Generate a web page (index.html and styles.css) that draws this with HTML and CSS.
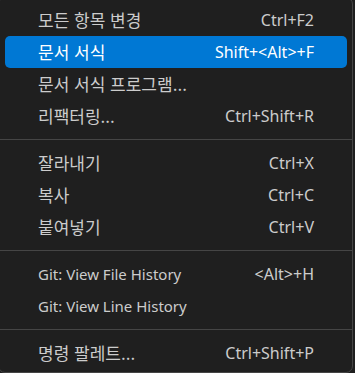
FILE: index.html
```html
<!DOCTYPE html>
<html lang="ko">
<head>
<meta charset="utf-8">
<link rel="stylesheet" href="styles.css">
</head>
<body>
<div class="menu">
  <div class="item"><span class="label ko">모든 항목 변경</span><span class="key">Ctrl+F2</span></div>
  <div class="item active"><span class="label ko">문서 서식</span><span class="key">Shift+&lt;Alt&gt;+F</span></div>
  <div class="item"><span class="label ko">문서 서식 프로그램...</span><span class="key"></span></div>
  <div class="item"><span class="label ko">리팩터링...</span><span class="key">Ctrl+Shift+R</span></div>
  <div class="sep"></div>
  <div class="item"><span class="label ko">잘라내기</span><span class="key">Ctrl+X</span></div>
  <div class="item"><span class="label ko">복사</span><span class="key">Ctrl+C</span></div>
  <div class="item"><span class="label ko">붙여넣기</span><span class="key">Ctrl+V</span></div>
  <div class="sep"></div>
  <div class="item"><span class="label">Git: View File History</span><span class="key">&lt;Alt&gt;+H</span></div>
  <div class="item"><span class="label">Git: View Line History</span><span class="key"></span></div>
  <div class="sep"></div>
  <div class="item"><span class="label ko">명령 팔레트...</span><span class="key">Ctrl+Shift+P</span></div>
</div>
</body>
</html>
```

FILE: styles.css
```css
html, body {
  margin: 0;
  padding: 0;
  background: #1f1f1f;
  overflow: hidden;
}
body {
  width: 355px;
  height: 373px;
}
.menu {
  box-sizing: border-box;
  width: 355px;
  margin-left: -2px;
  margin-top: -3px;
  padding: 6px 0 3px 0;
  background: #1f1f1f;
  border: 1px solid #454545;
  border-radius: 7px;
  font-family: "Noto Sans", "Noto Sans CJK KR", sans-serif;
  font-size: 15px;
  color: #cccccc;
  display: flex;
  flex-direction: column;
}
.item {
  height: 32px;
  margin: 0 5px 0 6px;
  padding: 0 33px;
  display: flex;
  align-items: center;
  justify-content: space-between;
  border-radius: 5px;
  white-space: nowrap;
}
.item.active {
  background: #0078d4;
  color: #ffffff;
}
.label.ko {
  font-family: "Noto Sans CJK KR", "Noto Sans", sans-serif;
  font-size: 17px;
  line-height: 20px;
}
.key {
  font-size: 16px;
}
.sep {
  height: 1px;
  margin: 7px 0;
  background: #454545;
}
```
